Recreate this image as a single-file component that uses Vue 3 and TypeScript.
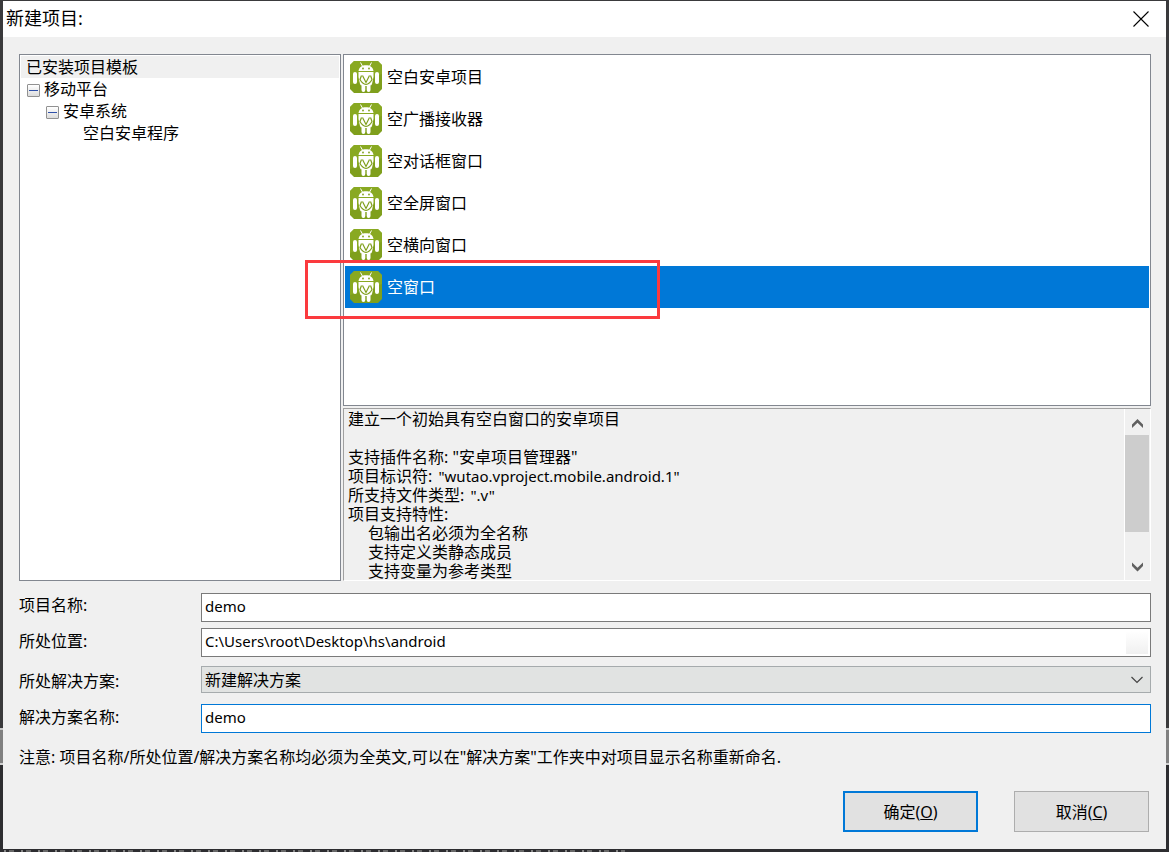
<script setup lang="ts">
import { ref } from 'vue'

const templates = ['空白安卓项目', '空广播接收器', '空对话框窗口', '空全屏窗口', '空横向窗口', '空窗口']
const selected = ref(5)

const features = ['包输出名必须为全名称', '支持定义类静态成员', '支持变量为参考类型']

const projectName = ref('demo')
const location = ref('C:\\Users\\root\\Desktop\\hs\\android')
const solution = ref('新建解决方案')
const solutionName = ref('demo')
</script>

<template>
  <div class="desktop">
    <div class="dialog" role="dialog" aria-labelledby="dialog-title">
      <header class="titlebar">
        <h1 id="dialog-title">新建项目:</h1>
        <button class="close" type="button" aria-label="关闭">
          <svg width="16" height="16" viewBox="0 0 16 16"><path d="M.5.5l15 15M15.5.5l-15 15" fill="none" stroke="#000" stroke-width="1.1" /></svg>
        </button>
      </header>

      <main class="content">
        <div class="panes">
          <nav class="tree">
            <div class="node root">已安装项目模板</div>
            <div class="node level1"><button class="toggle" type="button" aria-label="折叠"></button>移动平台</div>
            <div class="node level2"><button class="toggle" type="button" aria-label="折叠"></button>安卓系统</div>
            <div class="node level3">空白安卓程序</div>
          </nav>

          <div class="side">
            <div class="templates">
              <button
                v-for="(name, i) in templates"
                :key="name"
                type="button"
                class="item"
                :class="{ active: i === selected }"
                @click="selected = i"
              >
                <svg class="robot" width="32" height="32" viewBox="0 0 32 32">
                  <path d="M4 0h24l4 4v24l-4 4H4l-4-4V4z" fill="#7f9f1c" />
                  <path d="M4 0h24l4 4v9L0 24V4z" fill="#8fb126" opacity=".6" />
                  <path d="M10.500 1.500l2 3.700M21.500 1.500l-2 3.700" stroke="#fff" stroke-width="1" fill="none" />
                  <path d="M8.500 10C9 6.300 12 4.300 16 4.300s7 2 7.500 5.700z" fill="#fff" />
                  <circle cx="13" cy="7.500" r=".9" fill="#7f9f1c" />
                  <circle cx="19" cy="7.500" r=".9" fill="#7f9f1c" />
                  <rect x="3" y="11" width="4" height="12" rx="2" fill="#fff" />
                  <rect x="25" y="11" width="4" height="12" rx="2" fill="#fff" />
                  <path d="M8.500 11h15v5l-1.500 7q-.5 1.500-2 1.500h.500V29q0 2-1.900 2t-1.900-2v-4h-1.400v4q0 2-1.900 2t-1.900-2v-4.500h.5q-1.500 0-2-1.500l-1.500-7z" fill="#fff" />
                  <path d="M11.500 14.500l-1.500 4q2.500 4.500 6 5 3.500-.5 6-5l-1.500-4" fill="none" stroke="#7f9f1c" stroke-width="1.200" />
                  <path d="M12.500 14.500l3.500 7 3.500-7" fill="none" stroke="#7f9f1c" stroke-width="1.200" />
                </svg>
                <span>{{ name }}</span>
              </button>
            </div>

            <div class="details">
              <div class="description">
                <p>建立一个初始具有空白窗口的安卓项目</p>
                <p class="blank"></p>
                <p>支持插件名称: "安卓项目管理器"</p>
                <p>项目标识符: <span class="latin">"wutao.vproject.mobile.android.1"</span></p>
                <p>所支持文件类型: <span class="latin">".v"</span></p>
                <p>项目支持特性:</p>
                <p v-for="f in features" :key="f" class="feature">{{ f }}</p>
              </div>
              <div class="scrollbar">
                <button type="button" aria-label="向上滚动">
                  <svg width="11" height="10" viewBox="0 0 11 10"><path d="M5.500 0L11 5.500V9L5.500 3.800 0 9V5.500z" fill="#606060" /></svg>
                </button>
                <div class="track"><div class="thumb"></div></div>
                <button class="down" type="button" aria-label="向下滚动">
                  <svg width="11" height="10" viewBox="0 0 11 10"><path d="M5.500 9.500L11 4V.5L5.500 5.700 0 .5V4z" fill="#606060" /></svg>
                </button>
              </div>
            </div>
          </div>
        </div>

        <form @submit.prevent>
          <div class="fields">
            <label for="project">项目名称:</label>
            <input id="project" v-model="projectName" type="text" />
            <label class="low" for="location">所处位置:</label>
            <div class="browse-field">
              <input id="location" v-model="location" type="text" />
              <button type="button" class="browse" aria-label="浏览"></button>
            </div>
            <label class="low" for="solution">所处解决方案:</label>
            <div class="select-field">
              <select id="solution" v-model="solution">
                <option>新建解决方案</option>
              </select>
              <svg class="chevron" width="12" height="8" viewBox="0 0 12 8"><path d="M.5 1l5.500 5.500L11.500 1" fill="none" stroke="#444" stroke-width="1.200" /></svg>
            </div>
            <label class="low" for="solution-name">解决方案名称:</label>
            <input id="solution-name" v-model="solutionName" class="focused" type="text" />
          </div>
          <p class="note">注意: 项目名称/所处位置/解决方案名称均必须为全英文,可以在"解决方案"工作夹中对项目显示名称重新命名.</p>
          <div class="actions">
            <button type="submit" class="primary">确定(<u>O</u>)</button>
            <button type="button">取消(<u>C</u>)</button>
          </div>
        </form>
      </main>
    </div>
    <div class="backdrop-line"></div>
    <div class="annotation"></div>
  </div>
</template>

<style>
body {
  margin: 0;
  background: #2d2d30;
}
</style>

<style scoped>
* {
  box-sizing: border-box;
}
.desktop {
  position: relative;
  min-height: 100vh;
  padding: 1px 3px 3px;
  display: flex;
  background: linear-gradient(#3a3a3c 0 728px, #c8c8c8 728px 730px, #808080 730px 763px, #d0d0d0 763px 765px, #2d2d30 765px);
  font: 16px/19px "Noto Sans", "Noto Sans CJK SC", sans-serif;
  color: #000;
}
.dialog {
  flex: 1;
  min-width: 0;
  display: flex;
  flex-direction: column;
  background: #f0f0f0;
}
button,
input,
select {
  font: inherit;
  color: inherit;
  margin: 0;
}
p {
  margin: 0;
}
.titlebar {
  display: flex;
  align-items: center;
  justify-content: space-between;
  height: 36px;
  padding: 0 17px 1px 3px;
  background: #fff;
}
h1 {
  margin: 0;
  font-size: 18px;
  font-weight: 400;
}
.close {
  display: flex;
  padding: 0;
  border: 0;
  background: none;
}
.content {
  flex: 1;
  display: flex;
  flex-direction: column;
  padding: 17px 15px 17px 16px;
}
.panes {
  display: grid;
  grid-template-columns: 322px 1fr;
  gap: 2px;
}
.tree,
.templates {
  border: 1px solid #828790;
  background: #fff;
}
.tree {
  padding: 1px;
}
.node {
  display: flex;
  align-items: center;
  height: 22px;
  line-height: 22px;
}
.root {
  padding-left: 5px;
  background: #f0f0f0;
}
.level1 {
  padding-left: 6px;
}
.level2 {
  padding-left: 25px;
}
.level3 {
  padding-left: 62px;
}
.toggle {
  display: flex;
  align-items: center;
  width: 13px;
  height: 13px;
  margin: 2px 4px 0 0;
  padding: 0 1px;
  border: 1px solid #919191;
  border-radius: 1px;
  background: linear-gradient(#fff, #dcdcdc);
}
.toggle::before {
  content: "";
  flex: 1;
  height: 1px;
  background: #2f50a8;
}
.side {
  display: flex;
  flex-direction: column;
  gap: 2px;
  min-width: 0;
}
.templates {
  display: flex;
  flex-direction: column;
  height: 352px;
  padding: 1px;
}
.item {
  display: flex;
  align-items: center;
  gap: 5px;
  height: 42px;
  padding: 0 5px;
  border: 0;
  background: none;
  text-align: left;
}
.item.active {
  background: #0078d7;
  color: #fff;
}
.details {
  display: flex;
  height: 173px;
  border: 1px solid;
  border-color: #a0a0a0 #fff #fff #a0a0a0;
}
.description {
  flex: 1;
  min-width: 0;
  padding: 1px 4px 0;
  overflow: hidden;
  white-space: nowrap;
}
.blank {
  height: 19px;
}
.latin {
  padding-left: 2px;
  font-size: 15px;
}
.feature {
  padding-left: 20px;
}
.scrollbar {
  display: flex;
  flex-direction: column;
  width: 26px;
  padding: 0 1px 0 0;
  border-left: 1px solid #fff;
}
.scrollbar button {
  display: flex;
  align-items: center;
  justify-content: center;
  height: 26px;
  padding: 3px 0 0;
  border: 0;
  background: none;
}
.scrollbar .down {
  padding: 0;
}
.track {
  flex: 1;
}
.thumb {
  height: 97px;
  background: #cdcdcd;
}
form {
  flex: 1;
  display: flex;
  flex-direction: column;
  padding-top: 12px;
}
.fields {
  display: grid;
  grid-template-columns: 182px 1fr;
  grid-template-rows: 35px 38px 38px 29px;
  align-items: start;
}
.fields label {
  padding-top: 3px;
}
.fields .low {
  padding-top: 4px;
}
.fields .low[for="solution"] {
  padding-top: 6px;
}
.fields input {
  width: 100%;
  min-width: 0;
  height: 29px;
  padding: 0 3px 3px;
  border: 1px solid #7a7a7a;
  border-radius: 0;
  outline: 0;
  background: #fff;
  font-size: 15px;
}
.fields input.focused {
  border-color: #0078d7;
}
.browse-field,
.select-field {
  position: relative;
  display: flex;
}
.browse {
  position: absolute;
  top: 3px;
  right: 3px;
  width: 22px;
  height: 23px;
  border: 0;
  background: linear-gradient(#fff, #f0f0f0);
}
select {
  width: 100%;
  height: 27px;
  padding: 2px 3px 0;
  appearance: none;
  border: 1px solid #a6abad;
  border-radius: 0;
  background: #e1e3e2;
}
.chevron {
  position: absolute;
  top: 10px;
  right: 8px;
}
.note {
  margin-top: 15px;
}
.actions {
  display: flex;
  justify-content: flex-end;
  gap: 36px;
  margin-top: auto;
  padding-right: 2px;
}
.actions button {
  width: 135px;
  height: 41px;
  padding: 2px 0 0;
  border: 1px solid #adadad;
  background: #e1e1e1;
}
.actions .primary {
  border: 2px solid #0078d7;
}
.backdrop-line {
  position: absolute;
  bottom: 0;
  left: 0;
  width: 625px;
  height: 2px;
  background: repeating-linear-gradient(90deg, #2d2d30 0 4px, #858585 4px 6px, #2d2d30 6px 9px, #686868 9px 14px, #2d2d30 14px 17px);
}
.annotation {
  position: absolute;
  top: 260px;
  left: 305px;
  width: 355px;
  height: 59px;
  border: 3px solid #fb3a3e;
  pointer-events: none;
}
</style>
